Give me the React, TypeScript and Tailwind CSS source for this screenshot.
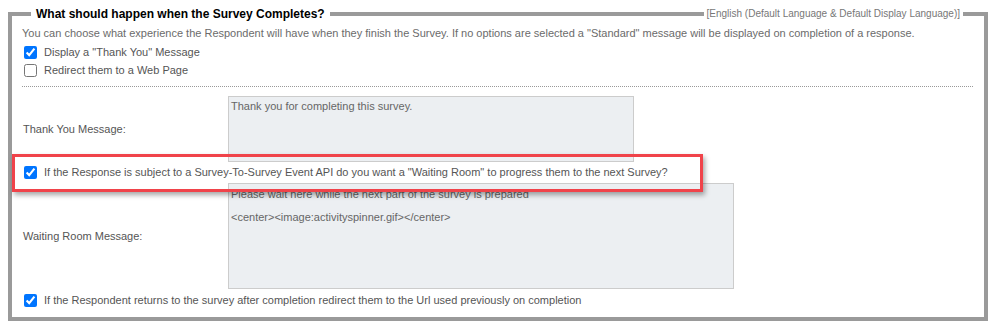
import React from "react";

function Check({ checked, label }: { checked: boolean; label: string }) {
  return (
    <label className="flex items-center h-[18px] text-[11px] leading-[14px] text-[#555]">
      <input
        type="checkbox"
        defaultChecked={checked}
        className="w-[13px] h-[13px] m-0 ml-[2px] mr-[7px] shrink-0"
      />
      <span>{label}</span>
    </label>
  );
}

export default function App() {
  return (
    <div
      className="w-[996px] h-[328px] bg-white pt-3 pl-2"
      style={{ fontFamily: '"Liberation Sans", Arial, sans-serif' }}
    >
      <div className="relative w-[980px] border-4 border-[#9a9a9a] pl-[10px] pr-[11px] pt-[10px] pb-[8px]">
        <div className="absolute left-[19px] top-[-10px] bg-white px-[5px] text-[12px] leading-4 font-bold text-black">
          What should happen when the Survey Completes?
        </div>
        <div className="absolute right-[21px] top-[-8px] bg-white px-[3px] text-[10px] leading-[12px] text-[#777]">
          [English (Default Language &amp; Default Display Language)]
        </div>

        <div className="text-[11px] leading-[14px] text-[#6b6b6b]">
          You can choose what experience the Respondent will have when they finish the Survey. If no options are selected a "Standard" message will be displayed on completion of a response.
        </div>
        <div className="mt-[3px]">
          <Check checked label={'Display a "Thank You" Message'} />
          <Check checked={false} label="Redirect them to a Web Page" />
        </div>
        <div className="mt-[7px] border-t border-dotted border-[#999]" />

        <div className="mt-[9px] flex items-center">
          <div className="w-[206px] pl-[1px] text-[11px] leading-[14px] text-[#555]">
            Thank You Message:
          </div>
          <div className="w-[406px] h-[66px] bg-[#eceff2] border border-[#cccccc] px-[2px] py-[2px] text-[11px] leading-[14px] text-[#666]">
            Thank you for completing this survey.
          </div>
        </div>

        <div className="mt-px">
          <Check
            checked
            label={'If the Response is subject to a Survey-To-Survey Event API do you want a "Waiting Room" to progress them to the next Survey?'}
          />
        </div>

        <div className="mt-[2px] flex items-center">
          <div className="w-[206px] pl-[1px] text-[11px] leading-[14px] text-[#555]">
            Waiting Room Message:
          </div>
          <div className="w-[506px] h-[106px] bg-[#eceff2] border border-[#cccccc] px-[2px] pt-[3px] text-[11px] leading-[14px] text-[#666]">
            <div>Please wait here while the next part of the survey is prepared</div>
            <div className="mt-[9px]">&lt;center&gt;&lt;image:activityspinner.gif&gt;&lt;/center&gt;</div>
          </div>
        </div>

        <div className="mt-[2px]">
          <Check
            checked
            label="If the Respondent returns to the survey after completion redirect them to the Url used previously on completion"
          />
        </div>

        <div className="absolute left-0 top-[138px] w-[691px] h-[38px] border-[3px] border-[#f0434a] shadow-[2px_3px_5px_rgba(0,0,0,0.35)] pointer-events-none" />
      </div>
    </div>
  );
}
